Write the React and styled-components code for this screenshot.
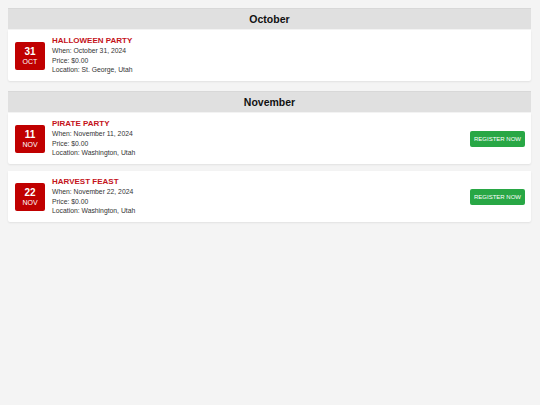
import React from 'react'
import styled, { createGlobalStyle } from 'styled-components'

const GlobalStyle = createGlobalStyle`
  html, body {
    margin: 0;
    padding: 0;
    background: #f4f4f4;
    font-family: "Liberation Sans", Arial, sans-serif;
  }
`

const Page = styled.div`
  padding: 8px 9px 8px 8px;
  display: flex;
  flex-direction: column;
  gap: 10px;
`

const Section = styled.section`
  display: flex;
  flex-direction: column;
  gap: 7px;
`

const MonthHeader = styled.h2`
  margin: 0 0 -6px 0;
  height: 21px;
  line-height: 21px;
  background: #e0e0e0;
  border-top: 1px solid #d8d8d8;
  box-sizing: border-box;
  text-align: center;
  font-size: 10.5px;
  font-weight: bold;
  color: #111;
`

const Card = styled.div`
  display: flex;
  align-items: center;
  gap: 7px;
  height: 51px;
  box-sizing: border-box;
  background: #fff;
  padding: 0 6px 0 7px;
  border-radius: 0 0 2px 2px;
  box-shadow: 0 1px 2px rgba(0, 0, 0, 0.08);
`

const DateBox = styled.div`
  width: 30px;
  height: 28px;
  flex: none;
  margin-top: 1px;
  border-radius: 2px;
  background: #c00000;
  color: #fff;
  display: flex;
  flex-direction: column;
  align-items: center;
  justify-content: center;
`

const Day = styled.span`
  font-size: 10px;
  font-weight: bold;
  line-height: 11px;
`

const Mon = styled.span`
  font-size: 7px;
  line-height: 9px;
`

const Info = styled.div`
  display: flex;
  flex-direction: column;
  flex: 1;
`

const Title = styled.div`
  font-size: 8px;
  font-weight: bold;
  line-height: 10px;
  color: #c4121a;
`

const Detail = styled.div`
  font-size: 6.8px;
  line-height: 9.7px;
  color: #333;
`

const RegisterButton = styled.button`
  flex: none;
  width: 55px;
  height: 16px;
  padding: 0;
  border: none;
  border-radius: 2px;
  background: #28a745;
  color: #fff;
  font-family: inherit;
  font-size: 6px;
  cursor: pointer;
`

const months = [
  {
    name: 'October',
    events: [
      { title: 'HALLOWEEN PARTY', day: '31', mon: 'OCT', when: 'October 31, 2024', price: '$0.00', location: 'St. George, Utah', register: false }
    ]
  },
  {
    name: 'November',
    events: [
      { title: 'PIRATE PARTY', day: '11', mon: 'NOV', when: 'November 11, 2024', price: '$0.00', location: 'Washington, Utah', register: true },
      { title: 'HARVEST FEAST', day: '22', mon: 'NOV', when: 'November 22, 2024', price: '$0.00', location: 'Washington, Utah', register: true }
    ]
  }
]

export default function App () {
  return (
    <>
      <GlobalStyle />
      <Page>
        {months.map(m => (
          <Section key={m.name}>
            <MonthHeader>{m.name}</MonthHeader>
            {m.events.map(e => (
              <Card key={e.title}>
                <DateBox>
                  <Day>{e.day}</Day>
                  <Mon>{e.mon}</Mon>
                </DateBox>
                <Info>
                  <Title>{e.title}</Title>
                  <Detail>When: {e.when}</Detail>
                  <Detail>Price: {e.price}</Detail>
                  <Detail>Location: {e.location}</Detail>
                </Info>
                {e.register && <RegisterButton>REGISTER NOW</RegisterButton>}
              </Card>
            ))}
          </Section>
        ))}
      </Page>
    </>
  )
}
